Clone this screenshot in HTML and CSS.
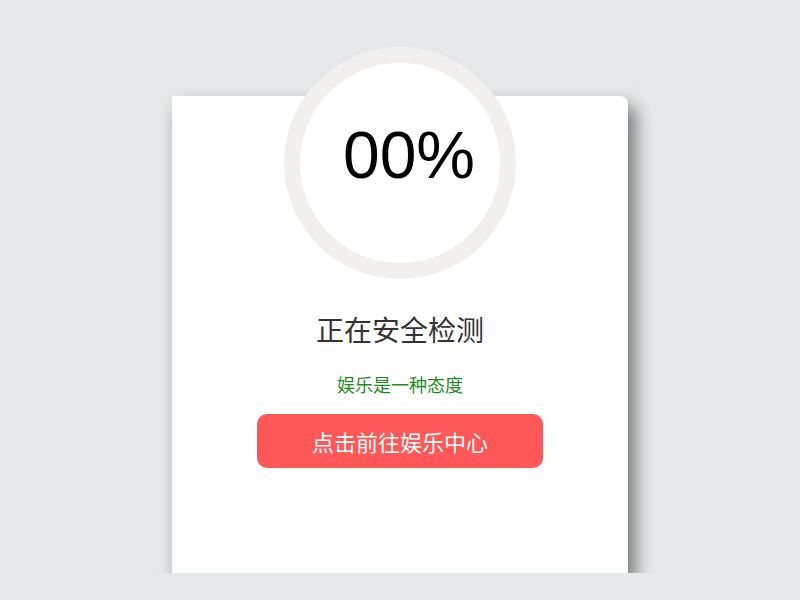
FILE: index.html
```html
<!DOCTYPE html>
<html lang="zh-CN">

<head>
    <meta charset="UTF-8">
    <meta name="viewport" content="width=device-width, initial-scale=1.0">
    <title>正在安全检测</title>
    <link rel="stylesheet" href="styles.css">
</head>

<body>
    <div class="card">
        <div class="ring">
            <span class="percent">00%</span>
        </div>
        <h1 class="title">正在安全检测</h1>
        <p class="slogan">娱乐是一种态度</p>
        <a class="go-btn" href="#">点击前往娱乐中心</a>
    </div>
</body>

</html>
```

FILE: styles.css
```css
body {
    margin: 0;
    padding: 0;
    background-color: #e4e8e9;
    font-family: 'Liberation Sans', 'Noto Sans CJK SC', sans-serif;
}

.card {
    width: 456px;
    margin: 96px auto 0;
    padding-bottom: 105px;
    background-color: #fff;
    border-radius: 2px 8px 0 0;
    box-shadow: 7px 10px 18px rgba(0, 0, 0, 0.5);
    display: flex;
    flex-direction: column;
    align-items: center;
}

.ring {
    width: 200px;
    height: 200px;
    margin-top: -49px;
    border: 16px solid #f2f0ef;
    border-radius: 50%;
    background-color: #fff;
    display: flex;
    align-items: center;
    justify-content: center;
}

.percent {
    font-family: 'Liberation Sans', sans-serif;
    font-size: 66px;
    line-height: 66px;
    color: #000;
    margin: 0 0 16px 18px;
}

.title {
    margin: 37px 0 0;
    font-size: 28px;
    line-height: 32px;
    font-weight: normal;
    color: #333;
}

.slogan {
    margin: 27px 0 0;
    font-size: 18px;
    line-height: 22px;
    color: #1f8a1f;
}

.go-btn {
    margin-top: 17px;
    width: 286px;
    height: 54px;
    border-radius: 10px;
    background-color: #fe5757;
    color: #fff;
    font-size: 22px;
    text-decoration: none;
    display: flex;
    align-items: center;
    justify-content: center;
}
```
